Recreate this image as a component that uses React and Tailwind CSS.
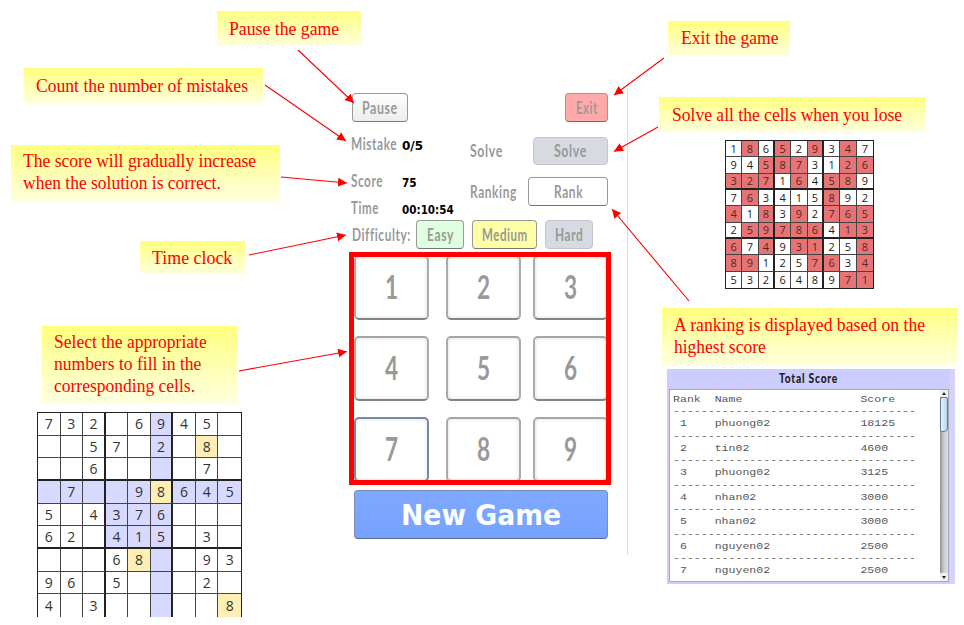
import { useLayoutEffect, useRef, useState } from "react";
import clsx from "clsx";

// Text squeezed or stretched horizontally to an exact width.
function Fit({ w, className, children }) {
  const ref = useRef(null);
  const [scale, setScale] = useState(1);
  useLayoutEffect(() => {
    setScale(w / ref.current.offsetWidth);
  }, [w]);
  return (
    <span className={clsx("block whitespace-pre", className)} style={{ width: w }}>
      <span ref={ref} className="inline-block origin-left" style={{ transform: `scaleX(${scale})` }}>
        {children}
      </span>
    </span>
  );
}

function Callout({ className, lines }) {
  return (
    <div
      className={clsx(
        "shrink-0 bg-linear-to-b from-[#ffff7c] to-[#ffffdc] pl-3 font-['Liberation_Serif',serif] text-[19px] leading-[22px] text-[#f00]",
        className
      )}
    >
      {lines.map(([text, w]) => (
        <Fit key={text} w={w}>{text}</Fit>
      ))}
    </div>
  );
}

const label = "font-['Lato',sans-serif] text-[16.5px] font-bold leading-[20px] tracking-[0.8px] text-[#999]";

function Btn({ className, text, w }) {
  return (
    <button
      className={clsx(
        "flex shrink-0 items-center justify-center rounded-[4px] border",
        label,
        className
      )}
    >
      <Fit w={w}>{text}</Fit>
    </button>
  );
}

function Board({ rows, tint, className, cellClass }) {
  return (
    <div className={clsx("grid grid-cols-9 grid-rows-9 border-[#222] font-['Open_Sans',sans-serif]", className)}>
      {rows.flatMap((row, r) =>
        row.split("").map((n, c) => (
          <div
            key={`${r}-${c}`}
            className={clsx(
              "flex items-center justify-center",
              c < 8 && (c % 3 === 2 ? "border-r-2 border-r-[#222]" : "border-r border-r-[#444]"),
              r < 8 && (r % 3 === 2 ? "border-b-2 border-b-[#222]" : "border-b border-b-[#444]"),
              cellClass,
              tint(r, c)
            )}
          >
            {n === "." ? "" : n}
          </div>
        ))
      )}
    </div>
  );
}

const PUZZLE = [
  "732.6945.",
  "..57.2.8.",
  "..6....7.",
  ".7..98645",
  "5.4376...",
  "62.415.3.",
  "...68..93",
  "96.5...2.",
  "4.3.....8",
];

function puzzleTint(r, c) {
  if (PUZZLE[r][c] === "8") return "bg-[#ffefb5]";
  if (r === 3 || c === 5 || (r > 2 && r < 6 && c > 2 && c < 6)) return "bg-[#d7d9ff]";
  return "bg-white";
}

const SOLVED = [
  "186529347",
  "945873126",
  "327164589",
  "763415892",
  "418392765",
  "259786413",
  "674931258",
  "891257634",
  "532648971",
];

const FILLED = [
  "010101010",
  "001110011",
  "111010110",
  "010000100",
  "101010111",
  "011111011",
  "101011001",
  "110001101",
  "000000011",
];

const solvedTint = (r, c) => (FILLED[r][c] === "1" ? "bg-[#e67475] text-[#5a2525]" : "bg-white");

const SCORES = [
  ["phuong02", "18125"],
  ["tin02", "4600"],
  ["phuong02", "3125"],
  ["nhan02", "3000"],
  ["nhan02", "3000"],
  ["nguyen02", "2500"],
  ["nguyen02", "2500"],
];

const DASHES = "-".repeat(35);

const LINES = [
  "Rank  Name                 Score   ",
  ...SCORES.flatMap(([name, score], i) => [
    DASHES,
    ` ${i + 1}    ${name.padEnd(21)}${score.padEnd(8)}`,
  ]),
];

function ScorePanel() {
  return (
    <div className="ml-[27px] mt-1 flex h-[215px] w-[288px] flex-col border-r-[5px] border-[#d3d3fb] bg-[#ccccff] pl-[2px]">
      <div className="flex h-[20px] justify-center pr-[3px] font-['Lato',sans-serif] text-[13px] font-black leading-[19px] tracking-[1px] text-[#222]">
        <Fit w={59}>Total Score</Fit>
      </div>
      <div className="flex h-[193px] w-[280px] border border-[#a9aab8] bg-white">
        <div className="w-[271px] overflow-hidden pl-[3px] pt-[3px] font-['Liberation_Mono',monospace] text-[9.2px] text-[#555]">
          {LINES.map((line, i) => (
            <Fit key={i} w={243} className="h-[12.24px] leading-[13px]">{line}</Fit>
          ))}
        </div>
        <div className="flex w-[8px] flex-col bg-linear-to-r from-[#8f9196] via-[#cdced3] to-[#dcdde2]">
          <div className="flex h-[7px] items-center justify-center bg-[#eee]">
            <svg width="4" height="3"><path d="M2 0 4 3H0Z" fill="#222" /></svg>
          </div>
          <div className="h-[35px] rounded-[2px] rounded-br-[4px] border border-[#587d9c] bg-linear-to-r from-[#e8f4fb] to-[#b6d6ec]" />
          <div className="mt-auto flex h-[8px] items-center justify-center bg-[#eee]">
            <svg width="4" height="3"><path d="M0 0H4L2 3Z" fill="#222" /></svg>
          </div>
        </div>
      </div>
    </div>
  );
}

function Key({ n, focused }) {
  return (
    <button
      className={clsx(
        "flex h-[65px] w-[75px] shrink-0 items-center justify-center rounded-[5px] border-2 bg-white pb-[3px] pr-px font-['Lato',sans-serif] text-[33px] font-bold leading-[40px] text-[#999] shadow-[inset_0_0_4px_#ddd]",
        focused ? "border-[#748ba3]" : "border-x-[#aaa] border-t-[#a5a5a5] border-b-[#848484]"
      )}
    >
      <Fit w={13}>{n}</Fit>
    </button>
  );
}

function Stat({ name, w, value, vw, className }) {
  return (
    <div className={clsx("flex h-5 items-center", className)}>
      <div className="w-[51px]">
        <Fit w={w} className={label}>{name}</Fit>
      </div>
      <Fit w={vw} className="pt-[3px] font-['DejaVu_Sans',sans-serif] text-[12px] font-bold leading-[16px] text-black">
        {value}
      </Fit>
    </div>
  );
}

function GamePanel() {
  return (
    <div className="mt-[88px] h-[467px] w-[279px] shrink-0 border-r border-[#ddd] pt-[5px]">
      <div className="flex justify-between pl-[3px] pr-[19px]">
        <Btn text="Pause" w={36} className="h-[29px] w-[56px] border-[#999] border-b-[#777] bg-linear-to-b from-white to-[#ececec]" />
        <Btn text="Exit" w={22} className="h-[29px] w-[43px] border-[#b09090] border-b-[#806060] bg-[#ffa9a9]" />
      </div>
      <div className="flex h-[98px] pl-[2px]">
        <div className="w-[119px] pt-[12px]">
          <Stat name="Mistake" w={46} value="0/5" vw={21} />
          <Stat name="Score" w={32} value="75" vw={15} className="mt-[17px]" />
          <Stat name="Time" w={28} value="00:10:54" vw={52} className="mt-[7px]" />
        </div>
        <div className="flex w-[138px] flex-col gap-[12px] pt-[15px]">
          <div className="flex items-center justify-between">
            <Fit w={33} className={label}>Solve</Fit>
            <Btn text="Solve" w={33} className="h-[28px] w-[75px] border-[#c3c6cd] bg-[#d7dae1]" />
          </div>
          <div className="flex items-center justify-between">
            <Fit w={47} className={label}>Ranking</Fit>
            <Btn text="Rank" w={29} className="h-[29px] w-[80px] border-[#999] border-b-[#777] bg-white" />
          </div>
        </div>
      </div>
      <div className="flex items-center pl-[3px]">
        <div className="w-[64px]"><Fit w={59} className={label}>Difficulty:</Fit></div>
        <Btn text="Easy" w={27} className="h-[29px] w-[48px] border-[#999] border-b-[#777] bg-[#e0ffe0]" />
        <Btn text="Medium" w={46} className="ml-[8px] h-[29px] w-[65px] border-[#999] border-b-[#777] bg-[#ffffa5]" />
        <Btn text="Hard" w={28} className="ml-[8px] h-[29px] w-[48px] border-[#c3c6cd] bg-[#d7dae1]" />
      </div>
      <div className="mt-[3px] h-[233px] w-[262px] overflow-hidden border-[5px] border-[#f00]">
        <div className="-mt-[2px] flex flex-col gap-4">
          {[1, 4, 7].map((first) => (
            <div key={first} className="flex">
              <Key n={first} focused={first === 7} />
              <div className="ml-[17px] flex gap-[12px]">
                <Key n={first + 1} />
                <Key n={first + 2} />
              </div>
            </div>
          ))}
        </div>
      </div>
      <button className="ml-[5px] mt-[5px] flex h-[49px] w-[254px] items-center justify-center rounded-[4px] border border-[#7c8db0] border-b-[#5c6c90] bg-linear-to-b from-[#7fa9ff] to-[#76a2ff] pr-px pt-[2px] font-['DejaVu_Sans',sans-serif] text-[28px] font-bold leading-[34px] text-white">
        <Fit w={160}>New Game</Fit>
      </button>
    </div>
  );
}

const ARROWS = [
  [298, 50, 354, 103],
  [265, 85, 346, 141],
  [281, 177, 347, 183],
  [249, 255, 346, 235],
  [239, 371, 347, 351.5],
  [664, 58, 614, 95],
  [658, 127, 614, 151.5],
  [689, 301, 612, 209],
];

function Arrows() {
  return (
    <svg className="pointer-events-none absolute inset-0" width="964" height="625">
      <defs>
        <marker id="head" markerUnits="userSpaceOnUse" markerWidth="10" markerHeight="10" refX="9" refY="4.5" orient="auto">
          <path d="M0 0 9 4.5 0 9Z" fill="#f00" />
        </marker>
      </defs>
      {ARROWS.map(([x1, y1, x2, y2]) => (
        <line key={y1} x1={x1} y1={y1} x2={x2} y2={y2} stroke="#f00" strokeWidth="1.1" markerEnd="url(#head)" />
      ))}
    </svg>
  );
}

export default function App() {
  return (
    <div className="relative flex h-[625px] w-[964px] overflow-hidden bg-white">
      <div className="flex w-[349px] shrink-0 flex-col items-start">
        <Callout className="ml-[217px] mt-[11px] h-[35px] w-[144px] pt-[7px]" lines={[["Pause the game", 110]]} />
        <Callout className="ml-[24px] mt-[22px] h-[35px] w-[239px] pt-[7px]" lines={[["Count the number of mistakes", 212]]} />
        <Callout
          className="ml-[11px] mt-[42px] h-[56px] w-[269px] pt-[5px]"
          lines={[["The score will gradually increase", 233], ["when the solution is correct.", 198]]}
        />
        <Callout className="ml-[140px] mt-[40px] h-[33px] w-[105px] pt-[6px]" lines={[["Time clock", 80]]} />
        <Callout
          className="ml-[42px] mt-[52px] h-[77px] w-[195px] pt-[5px]"
          lines={[["Select the appropriate", 153], ["numbers to fill in the", 147], ["corresponding cells.", 141]]}
        />
        <Board
          rows={PUZZLE}
          tint={puzzleTint}
          className="ml-[37px] mt-[9px] h-[205px] w-[205px] border border-b-0 text-[14px] text-[#333]"
          cellClass="pt-px leading-[18px]"
        />
      </div>
      <GamePanel />
      <div className="ml-[12px] flex w-[324px] shrink-0 flex-col items-start">
        <Callout className="ml-[28px] mt-[21px] h-[35px] w-[122px] pl-[13px] pt-[6px]" lines={[["Exit the game", 98]]} />
        <Callout className="ml-[19px] mt-[41px] h-[35px] w-[266px] pl-[13px] pt-[7px]" lines={[["Solve all the cells when you lose", 230]]} />
        <Board
          rows={SOLVED}
          tint={solvedTint}
          className="ml-[85px] mt-[8px] h-[149px] w-[149px] border text-[11px] text-[#222]"
          cellClass="leading-[14px]"
        />
        <Callout
          className="ml-[22px] mt-[19px] h-[57px] w-[295px] pt-[6px]"
          lines={[["A ranking is displayed based on the", 251], ["highest score", 92]]}
        />
        <ScorePanel />
      </div>
      <Arrows />
    </div>
  );
}
